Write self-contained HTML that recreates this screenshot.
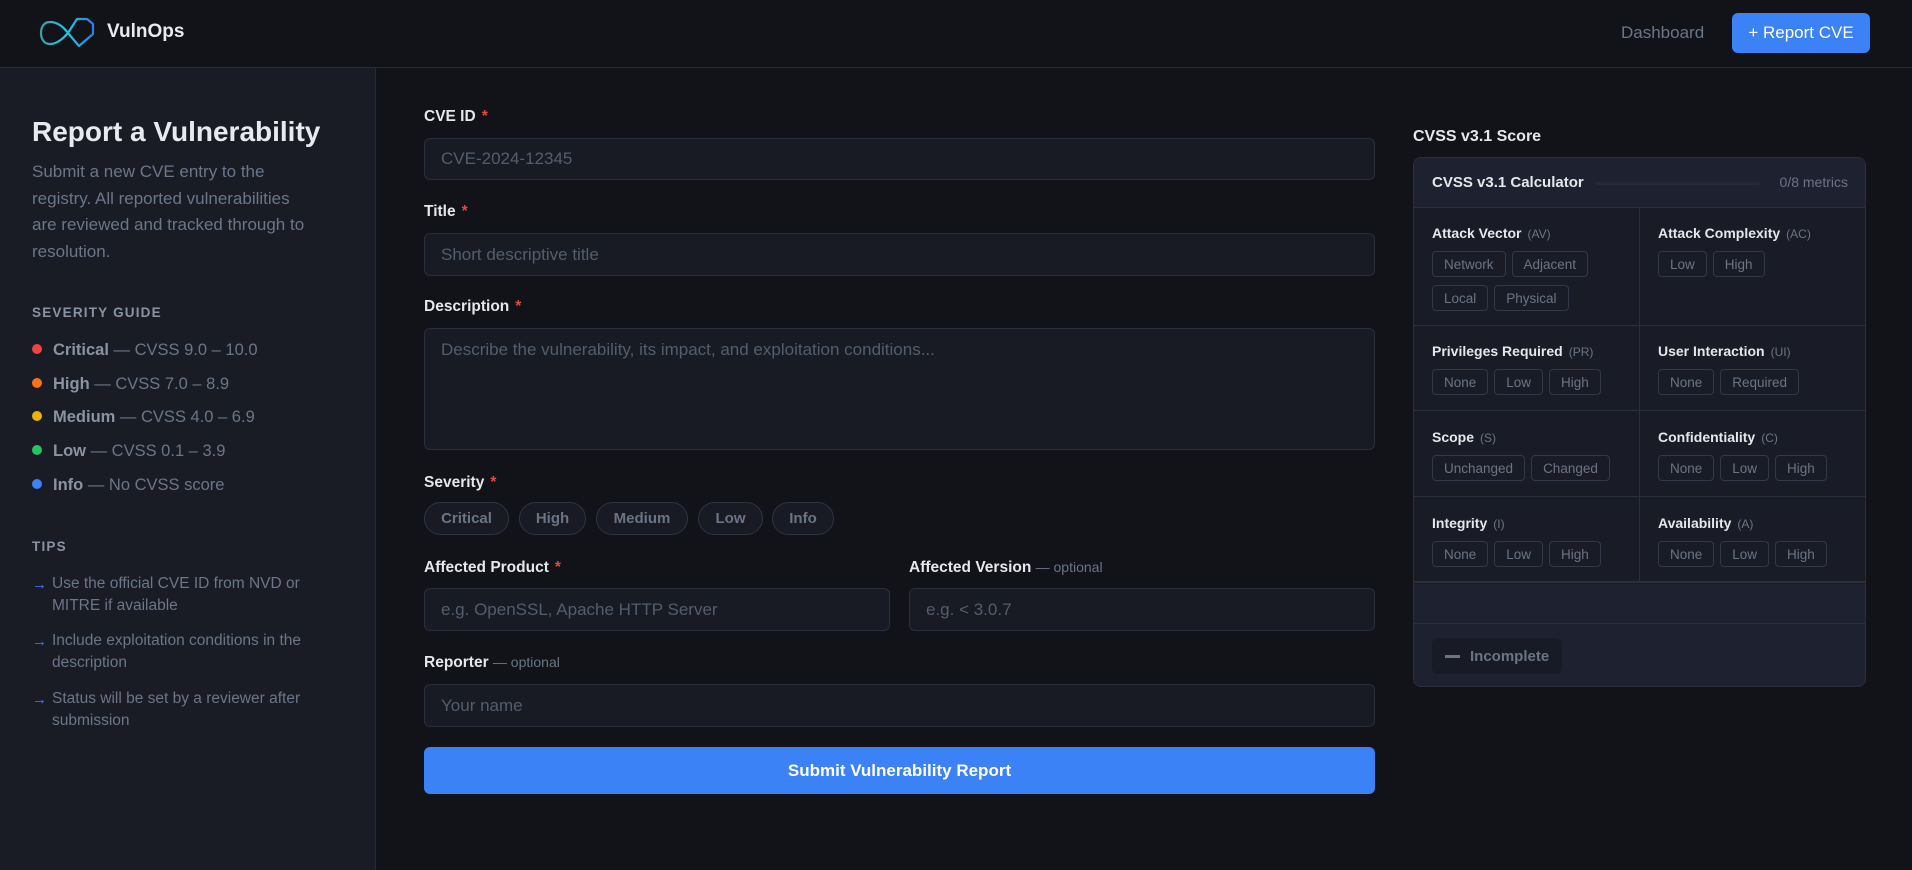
<!DOCTYPE html>
<html><head><meta charset="utf-8"><style>
*{box-sizing:border-box;margin:0;padding:0}
body{width:1912px;height:870px;background:#111318;font-family:"Liberation Sans",sans-serif;color:#e5e7eb;position:relative;overflow:hidden}
.hdr{position:absolute;left:0;top:0;width:1912px;height:68px;border-bottom:1px solid #2a2d37;background:#111318}
.side{position:absolute;left:0;top:68px;width:376px;height:802px;background:#191c25;border-right:1px solid #262a33}
.abs{position:absolute}
.lbl{position:absolute;left:424px;font-size:15.5px;font-weight:bold;color:#e5e7eb}
.lbl .r{color:#ef4444;margin-left:6px}
.lbl .o{color:#6b7485;font-weight:normal;font-size:14px}
.inp{position:absolute;background:#181b24;border:1px solid #2a2f3b;border-radius:6px;color:#545d6e;font-size:17px;padding-left:16px;display:flex;align-items:center}
.pill{position:absolute;top:502px;height:33px;border:1px solid #2f3441;border-radius:17px;background:#181b24;color:#6b7485;font-size:15px;font-weight:bold;display:flex;align-items:center;justify-content:center}
.sev{position:absolute;left:32px;font-size:16.5px;color:#6b7689}
.sev b{color:#8a93a3}
.dot{display:inline-block;width:10px;height:10px;border-radius:50%;margin-right:11px;vertical-align:1px}
.tip{position:absolute;left:52px;width:290px;font-size:15.5px;line-height:22px;color:#6b7689}
.tip:before{content:"→";position:absolute;left:-20px;top:1px;color:#3b82f6;font-size:15px}
.cap{position:absolute;left:32px;font-size:13.5px;letter-spacing:1.2px;color:#8a93a3;font-weight:bold}
.card{position:absolute;left:1413px;top:157px;width:453px;height:530px;background:#191c26;border:1px solid #2a2f3c;border-radius:8px;overflow:hidden}
.cell{position:absolute;border-bottom:1px solid #2a2f3c}
.ml{position:absolute;font-size:14px;font-weight:bold;color:#e5e7eb}
.ml span{font-size:12px;font-weight:normal;color:#6b7485;margin-left:6px}
.chips{position:absolute;display:flex;flex-wrap:wrap;gap:8px 6px;width:200px}
.chip{height:26px;border:1px solid #323848;border-radius:4px;padding:0 11px;font-size:13.5px;color:#6b7485;display:flex;align-items:center}
</style></head><body>
<div class="hdr">
<svg class="abs" style="left:39px;top:17px" width="58" height="32" viewBox="0 0 58 32"><defs><linearGradient id="g" x1="0" x2="1"><stop offset="0" stop-color="#3aa0a8"/><stop offset="0.5" stop-color="#1ec8e0"/><stop offset="1" stop-color="#2f7fe0"/></linearGradient></defs><path d="M29 16 C23 8 17 5 11 5 C5 5 2 10 2 16 C2 22 5 27 11 27 C17 27 23 23 29 16 L40 29 L54 17 L54 7 L48 2 L38 2 Z" fill="none" stroke="url(#g)" stroke-width="2.2" stroke-linejoin="round"/></svg>
<div class="abs" style="left:107px;top:21px;font-size:19px;font-weight:bold;color:#e8eaf0">VulnOps</div>
<div class="abs" style="left:1621px;top:23px;font-size:17px;color:#6b7689">Dashboard</div>
<div class="abs" style="left:1732px;top:13px;width:138px;height:40px;background:#3b82f6;border-radius:6px;color:#fff;font-size:17px;display:flex;align-items:center;justify-content:center">+ Report CVE</div>
</div>
<div class="side">
<div class="abs" style="left:32px;top:48px;font-size:28px;font-weight:bold;color:#e8eaf0">Report a Vulnerability</div>
<div class="abs" style="left:32px;top:91px;width:282px;font-size:17px;line-height:26.5px;color:#6b7689">Submit a new CVE entry to the registry. All reported vulnerabilities are reviewed and tracked through to resolution.</div>
<div class="cap" style="top:237px">SEVERITY GUIDE</div>
<div class="sev" style="top:273px"><i class="dot" style="background:#ef4444"></i><b>Critical</b> — CVSS 9.0 – 10.0</div>
<div class="sev" style="top:307px"><i class="dot" style="background:#f97316"></i><b>High</b> — CVSS 7.0 – 8.9</div>
<div class="sev" style="top:340px"><i class="dot" style="background:#eab308"></i><b>Medium</b> — CVSS 4.0 – 6.9</div>
<div class="sev" style="top:374px"><i class="dot" style="background:#22c55e"></i><b>Low</b> — CVSS 0.1 – 3.9</div>
<div class="sev" style="top:408px"><i class="dot" style="background:#3b82f6"></i><b>Info</b> — No CVSS score</div>
<div class="cap" style="top:471px">TIPS</div>
<div class="tip" style="top:505px">Use the official CVE ID from NVD or MITRE if available</div>
<div class="tip" style="top:562px">Include exploitation conditions in the description</div>
<div class="tip" style="top:620px">Status will be set by a reviewer after submission</div>
</div>

<div class="lbl" style="top:108px">CVE ID<span class="r">*</span></div>
<div class="inp" style="left:424px;top:138px;width:951px;height:42px">CVE-2024-12345</div>
<div class="lbl" style="top:203px">Title<span class="r">*</span></div>
<div class="inp" style="left:424px;top:233px;width:951px;height:43px">Short descriptive title</div>
<div class="lbl" style="top:298px">Description<span class="r">*</span></div>
<div class="inp" style="left:424px;top:328px;width:951px;height:122px;align-items:flex-start;padding-top:11px">Describe the vulnerability, its impact, and exploitation conditions...</div>
<div class="lbl" style="top:474px">Severity<span class="r">*</span></div>
<div class="pill" style="left:424px;width:85px">Critical</div>
<div class="pill" style="left:519px;width:67px">High</div>
<div class="pill" style="left:596px;width:92px">Medium</div>
<div class="pill" style="left:698px;width:65px">Low</div>
<div class="pill" style="left:772px;width:62px">Info</div>
<div class="lbl" style="top:559px">Affected Product<span class="r">*</span></div>
<div class="lbl" style="top:559px;left:909px">Affected Version <span class="o">— optional</span></div>
<div class="inp" style="left:424px;top:588px;width:466px;height:43px">e.g. OpenSSL, Apache HTTP Server</div>
<div class="inp" style="left:909px;top:588px;width:466px;height:43px">e.g. &lt; 3.0.7</div>
<div class="lbl" style="top:654px">Reporter <span class="o">— optional</span></div>
<div class="inp" style="left:424px;top:684px;width:951px;height:43px">Your name</div>
<div class="abs" style="left:424px;top:747px;width:951px;height:47px;background:#3b82f6;border-radius:6px;color:#fff;font-size:17px;font-weight:bold;display:flex;align-items:center;justify-content:center">Submit Vulnerability Report</div>

<div class="abs" style="left:1413px;top:128px;font-size:16px;font-weight:bold;color:#e5e7eb">CVSS v3.1 Score</div>
<div class="card">
<div class="abs" style="left:0;top:0;width:453px;height:50px;background:#1e2230;border-bottom:1px solid #2a2f3c"></div>
<div class="abs" style="left:18px;top:16px;font-size:15px;font-weight:bold;color:#e5e7eb">CVSS v3.1 Calculator</div>
<div class="abs" style="left:182px;top:24px;width:164px;height:3px;background:#252a37;border-radius:2px"></div>
<div class="abs" style="right:17px;top:16px;font-size:14px;color:#6b7485">0/8 metrics</div>
<div class="abs" style="left:225px;top:50px;width:1px;height:375px;background:#2a2f3c"></div>
<div class="cell" style="left:0;top:50px;width:453px;height:118px"></div>
<div class="cell" style="left:0;top:168px;width:453px;height:85px"></div>
<div class="cell" style="left:0;top:253px;width:453px;height:86px"></div>
<div class="cell" style="left:0;top:339px;width:453px;height:86px;border-bottom:2px solid #2a2f3c"></div>
<div class="abs" style="left:0;top:426px;width:453px;height:104px;background:#1e2230"></div>
<div class="abs" style="left:0;top:465px;width:453px;height:1px;background:#2a2f3c"></div>

<div class="ml" style="left:18px;top:67px">Attack Vector<span>(AV)</span></div>
<div class="chips" style="left:18px;top:93px"><div class="chip">Network</div><div class="chip">Adjacent</div><div class="chip">Local</div><div class="chip">Physical</div></div>
<div class="ml" style="left:244px;top:67px">Attack Complexity<span>(AC)</span></div>
<div class="chips" style="left:244px;top:93px"><div class="chip">Low</div><div class="chip">High</div></div>

<div class="ml" style="left:18px;top:185px">Privileges Required<span>(PR)</span></div>
<div class="chips" style="left:18px;top:211px"><div class="chip">None</div><div class="chip">Low</div><div class="chip">High</div></div>
<div class="ml" style="left:244px;top:185px">User Interaction<span>(UI)</span></div>
<div class="chips" style="left:244px;top:211px"><div class="chip">None</div><div class="chip">Required</div></div>

<div class="ml" style="left:18px;top:271px">Scope<span>(S)</span></div>
<div class="chips" style="left:18px;top:297px;width:220px"><div class="chip">Unchanged</div><div class="chip">Changed</div></div>
<div class="ml" style="left:244px;top:271px">Confidentiality<span>(C)</span></div>
<div class="chips" style="left:244px;top:297px"><div class="chip">None</div><div class="chip">Low</div><div class="chip">High</div></div>

<div class="ml" style="left:18px;top:357px">Integrity<span>(I)</span></div>
<div class="chips" style="left:18px;top:383px"><div class="chip">None</div><div class="chip">Low</div><div class="chip">High</div></div>
<div class="ml" style="left:244px;top:357px">Availability<span>(A)</span></div>
<div class="chips" style="left:244px;top:383px"><div class="chip">None</div><div class="chip">Low</div><div class="chip">High</div></div>

<div class="abs" style="left:18px;top:480px;width:130px;height:36px;background:#181b25;border-radius:6px;display:flex;align-items:center;padding-left:13px;font-size:15px;font-weight:bold;color:#6b7485"><i style="display:inline-block;width:15px;height:3px;background:#6b7485;margin-right:10px"></i>Incomplete</div>
</div>
</body></html>
